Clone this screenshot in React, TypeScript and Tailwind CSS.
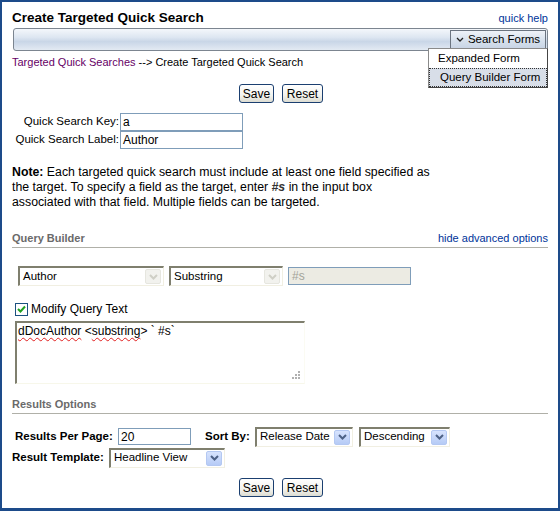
import React from "react";

const Chevron = ({ color = "#4d6185" }: { color?: string }) => (
  <svg width="9" height="6" viewBox="0 0 9 6">
    <polyline points="1,1 4.5,4.5 8,1" fill="none" stroke={color} strokeWidth="2" />
  </svg>
);

function Btn({ children, w }: { children: React.ReactNode; w: string }) {
  return (
    <div
      className={`${w} h-[19px] rounded-[3px] border border-[#1b3f70] bg-[linear-gradient(#ffffff,#f3f3ee_60%,#dcdcd2)] flex items-center justify-center text-[12px] leading-none`}
    >
      {children}
    </div>
  );
}

function Sel({
  w,
  text,
  disabled,
}: {
  w: string;
  text: string;
  disabled?: boolean;
}) {
  return (
    <div
      className={`${w} h-[20px] border-t-2 border-l-2 border-[#7f7f6e] border-r border-b border-r-[#f1efe2] border-b-[#f1efe2] bg-white flex items-center justify-between pl-[3px] pr-[2px]`}
    >
      <span className="text-[11.5px] leading-none whitespace-nowrap">{text}</span>
      {disabled ? (
        <div className="w-[16px] h-[15px] shrink-0 rounded-[2px] bg-[#f2f2ee] border border-[#e6e6df] flex items-center justify-center">
          <Chevron color="#cfcfc6" />
        </div>
      ) : (
        <div className="w-[16px] h-[15px] shrink-0 rounded-[2px] bg-[linear-gradient(#d7e3fd,#b6cbf6)] border border-[#b4c8f2] flex items-center justify-center">
          <Chevron color="#4d6185" />
        </div>
      )}
    </div>
  );
}

export default function App() {
  return (
    <div className="w-[560px] h-[511px] bg-white border-2 border-b-[3px] border-[#1d4b8a] font-['Liberation_Sans',Arial,sans-serif] text-[12px] text-black relative overflow-hidden">
      {/* header */}
      <div className="flex items-end justify-between pl-[10px] pr-[10px] h-[24px]">
        <div className="font-bold text-[13.5px] leading-none pb-[2px]">Create Targeted Quick Search</div>
        <div className="text-[11px] text-[#003399] leading-none pb-[2px]">quick help</div>
      </div>
      {/* toolbar */}
      <div className="ml-[11px] mr-[10px] mt-[2px] h-[23px] rounded-[3px] border border-[#7c8590] bg-[linear-gradient(#f4f7fb,#dde6f1_40%,#c9d6e7_60%,#e3eaf3)] flex justify-end items-center pr-[1px]">
        <div className="w-[96px] h-[20px] border border-[#6b7480] bg-[linear-gradient(#eef2f8,#d6e0ec_55%,#c7d3e4)] flex items-center justify-center gap-[4px] text-[11.5px]">
          <svg width="8" height="6" viewBox="0 0 8 6">
            <polyline points="1,1 4,4 7,1" fill="none" stroke="#222" strokeWidth="1.3" />
          </svg>
          <span className="leading-none">Search Forms</span>
        </div>
      </div>
      {/* breadcrumb */}
      <div className="pl-[10px] mt-[4px] text-[11px] leading-[14px]">
        <span className="text-[#660066]">Targeted Quick Searches</span> --&gt; Create Targeted Quick Search
      </div>
      {/* dropdown menu */}
      <div className="absolute left-[426px] top-[46px] w-[120px] h-[40px] bg-white border border-[#8a8a8a] border-r-[#444] border-b-[#444] text-[11.5px] pt-[1px]">
        <div className="h-[18px] flex items-center pl-[9px]">Expanded Form</div>
        <div className="h-[19px] flex items-center pl-[10px] bg-[#d8dee8] border border-dotted border-[#333]">Query Builder Form</div>
      </div>
      {/* save reset */}
      <div className="flex justify-center gap-[8px] mt-[15px] pl-[2px]">
        <Btn w="w-[35px]">Save</Btn>
        <Btn w="w-[41px]">Reset</Btn>
      </div>
      {/* key/label */}
      <div className="mt-[10px] pl-[10px] flex flex-col">
        <div className="flex h-[18px]">
          <div className="w-[108px] flex items-center justify-end pr-[1px] whitespace-nowrap text-[11.5px]">Quick Search Key:</div>
          <div className="w-[123px] border border-[#7f9db9] flex items-center pl-[2px] text-[12px]">a</div>
        </div>
        <div className="flex h-[18px]">
          <div className="w-[108px] flex items-center justify-end pr-[1px] whitespace-nowrap text-[11.5px]">Quick Search Label:</div>
          <div className="w-[123px] border border-[#7f9db9] flex items-center pl-[2px] text-[12px]">Author</div>
        </div>
      </div>
      {/* note */}
      <div className="pl-[10px] mt-[16px] leading-[15px] text-[12.3px]">
        <b>Note:</b> Each targeted quick search must include at least one field specified as
        <br />
        the target. To specify a field as the target, enter <i className="font-bold text-[#333]">#s</i> in the input box
        <br />
        associated with that field. Multiple fields can be targeted.
      </div>
      {/* query builder header */}
      <div className="mx-[10px] mt-[20px] flex justify-between items-end border-b border-[#b0b0a8] pb-[3px] h-[18px]">
        <span className="font-bold text-[11px] text-[#6a6a6a] leading-none">Query Builder</span>
        <span className="text-[11px] text-[#003399] leading-none">hide advanced options</span>
      </div>
      {/* selects row */}
      <div className="flex items-center mt-[18px] pl-[16px]">
        <Sel w="w-[146px]" text="Author" disabled />
        <div className="w-[5px]" />
        <Sel w="w-[114px]" text="Substring" disabled />
        <div className="w-[5px]" />
        <div className="w-[123px] h-[18px] border border-[#7f9db9] bg-[#ecebe3] flex items-center pl-[3px] text-[12px] text-[#a3a39a]">#s</div>
      </div>
      {/* checkbox */}
      <div className="flex items-center mt-[16px] pl-[13px] h-[14px]">
        <div className="w-[13px] h-[13px] border border-[#1c5180] bg-white flex items-center justify-center">
          <svg width="9" height="9" viewBox="0 0 9 9">
            <polyline points="1,4 3.5,6.5 8,1.5" fill="none" stroke="#21a121" strokeWidth="2" />
          </svg>
        </div>
        <span className="ml-[3px] text-[12px]">Modify Query Text</span>
      </div>
      {/* textarea */}
      <div className="ml-[13px] mt-[5px] w-[290px] h-[63px] border-t-2 border-l-2 border-[#7f7f6e] border-r border-b border-r-[#fbfbf3] border-b-[#f7f7ea] bg-white relative pl-[1px] pt-[1px] text-[12px] leading-[15px]">
        <span className="underline decoration-wavy decoration-[#e02020] decoration-1 underline-offset-2">dDocAuthor</span>{" "}
        &lt;<span className="underline decoration-wavy decoration-[#e02020] decoration-1 underline-offset-2">substring</span>&gt; ` #s`
        <svg className="absolute right-[3px] bottom-[3px]" width="10" height="10" viewBox="0 0 10 10">
          <rect x="7" y="1" width="2" height="2" fill="#b0b0b0" />
          <rect x="4" y="4" width="2" height="2" fill="#b0b0b0" />
          <rect x="7" y="4" width="2" height="2" fill="#b0b0b0" />
          <rect x="1" y="7" width="2" height="2" fill="#b0b0b0" />
          <rect x="4" y="7" width="2" height="2" fill="#b0b0b0" />
          <rect x="7" y="7" width="2" height="2" fill="#b0b0b0" />
        </svg>
      </div>
      {/* results options header */}
      <div className="mx-[10px] mt-[12px] border-b border-[#b0b0a8] pb-[3px] h-[18px] flex items-end">
        <span className="font-bold text-[11px] text-[#6a6a6a] leading-none">Results Options</span>
      </div>
      {/* results per page row */}
      <div className="flex items-center mt-[13px] pl-[13px] h-[19px]">
        <span className="font-bold text-[11.5px] w-[103px] whitespace-nowrap">Results Per Page:</span>
        <div className="w-[73px] h-[17px] border border-[#7f9db9] flex items-center pl-[2px] text-[12px]">20</div>
        <span className="font-bold text-[11.5px] ml-[14px] w-[50px] whitespace-nowrap">Sort By:</span>
        <Sel w="w-[98px]" text="Release Date" />
        <div className="w-[6px]" />
        <Sel w="w-[91px]" text="Descending" />
      </div>
      <div className="flex items-center mt-[2px] pl-[10px] h-[19px]">
        <span className="font-bold text-[11.5px] w-[97px] whitespace-nowrap">Result Template:</span>
        <Sel w="w-[116px]" text="Headline View" />
      </div>
      {/* save reset */}
      <div className="flex justify-center gap-[8px] mt-[11px] pl-[2px]">
        <Btn w="w-[35px]">Save</Btn>
        <Btn w="w-[41px]">Reset</Btn>
      </div>
    </div>
  );
}
